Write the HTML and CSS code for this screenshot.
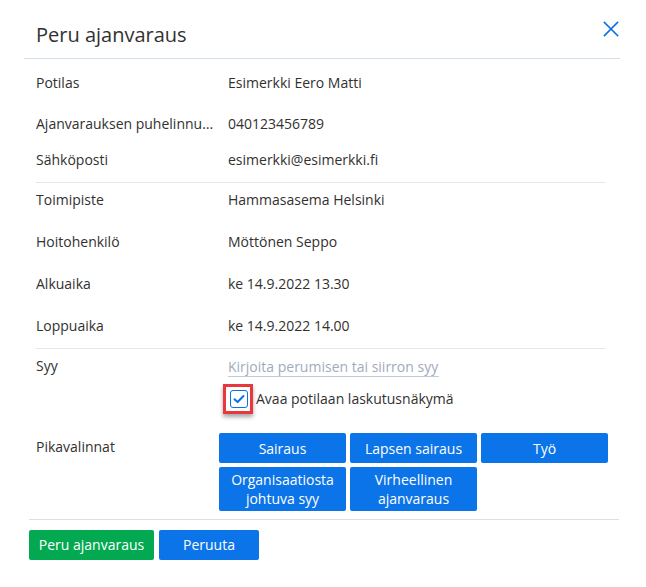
FILE: index.html
```html
<!DOCTYPE html>
<html lang="fi">
<head>
<meta charset="utf-8">
<title>Peru ajanvaraus</title>
<link rel="stylesheet" href="styles.css">
</head>
<body>
<div class="dialog">
  <div class="header">
    <h1 class="title">Peru ajanvaraus</h1>
    <button class="close" aria-label="Sulje">
      <svg width="16" height="16" viewBox="0 0 16 16"><path d="M1.5 1.5 L14.5 14.5 M14.5 1.5 L1.5 14.5" stroke="#0b72e3" stroke-width="1.7" fill="none" stroke-linecap="square"/></svg>
    </button>
  </div>

  <div class="section s1">
    <div class="row r1"><div class="label">Potilas</div><div class="value">Esimerkki Eero Matti</div></div>
    <div class="row r2"><div class="label">Ajanvarauksen puhelinnumero</div><div class="value">040123456789</div></div>
    <div class="row r3"><div class="label">Sähköposti</div><div class="value">esimerkki@esimerkki.fi</div></div>
  </div>

  <div class="section s2">
    <div class="row"><div class="label">Toimipiste</div><div class="value">Hammasasema Helsinki</div></div>
    <div class="row"><div class="label">Hoitohenkilö</div><div class="value">Möttönen Seppo</div></div>
    <div class="row"><div class="label">Alkuaika</div><div class="value">ke 14.9.2022 13.30</div></div>
    <div class="row"><div class="label">Loppuaika</div><div class="value">ke 14.9.2022 14.00</div></div>
  </div>

  <div class="section s3">
    <div class="row r-syy"><div class="label">Syy</div><div class="value"><input class="reason" type="text" placeholder="Kirjoita perumisen tai siirron syy"></div></div>
    <div class="row r-check">
      <div class="label"></div>
      <div class="value check-line">
        <span class="highlight">
          <span class="checkbox">
            <svg width="14" height="14" viewBox="0 0 14 14"><path d="M2.5 7.2 L5.6 10 L11.5 4" stroke="#0b72e3" stroke-width="2" fill="none" stroke-linecap="round" stroke-linejoin="round"/></svg>
          </span>
        </span>
        <span class="check-text">Avaa potilaan laskutusnäkymä</span>
      </div>
    </div>
    <div class="row r-quick">
      <div class="label">Pikavalinnat</div>
      <div class="quick">
        <button class="qbtn">Sairaus</button>
        <button class="qbtn">Lapsen sairaus</button>
        <button class="qbtn">Työ</button>
        <button class="qbtn tall">Organisaatiosta<br>johtuva syy</button>
        <button class="qbtn tall">Virheellinen<br>ajanvaraus</button>
      </div>
    </div>
  </div>

  <div class="footer">
    <button class="btn green">Peru ajanvaraus</button>
    <button class="btn blue">Peruuta</button>
  </div>
</div>
</body>
</html>
```
FILE: styles.css
```css
* { box-sizing: border-box; }
html, body { margin: 0; padding: 0; background: #ffffff; }
body {
  font-family: "Open Sans", "Noto Sans", sans-serif;
  font-size: 14px;
  color: #323130;
}
.dialog { width: 646px; height: 587px; }

.header {
  margin: 0 26px 0 24px;
  height: 59px;
  border-bottom: 1px solid #d3e0ec;
  display: flex;
  align-items: flex-start;
  justify-content: space-between;
}
.title {
  margin: 21px 0 0 12px;
  font-size: 20px;
  font-weight: 400;
  line-height: 28px;
  color: #323130;
}
.close {
  margin: 21px 1px 0 0;
  padding: 0;
  border: 0;
  background: none;
  width: 16px;
  height: 16px;
  display: block;
}
.close svg { display: block; }

.section {
  margin: 0 40px 0 36px;
  border-bottom: 1px solid #e3e8ec;
}
.row { display: flex; line-height: 20px; }
.label {
  width: 192px;
  flex: none;
  padding-right: 8px;
  white-space: nowrap;
  overflow: hidden;
  text-overflow: ellipsis;
}
.value { flex: 1; }

.s1 { padding-top: 14px; height: 124px; }
.s1 .r2 { margin-top: 21px; }
.s1 .r3 { margin-top: 16px; }

.s2 { padding-top: 7px; height: 166px; }
.s2 .row { height: 42px; }
.s2 .row:last-child { height: 34px; }

.s3 { border-bottom: none; margin-right: 37px; }
.r-syy { margin-top: 7px; }
.reason {
  font: inherit;
  width: 211px;
  border: 0;
  border-bottom: 1px solid #c3cad6;
  padding: 0;
  height: 21px;
  line-height: 20px;
  outline: none;
  color: #323130;
}
.reason::placeholder { color: #a1abbd; }

.r-check { margin-top: 7px; }
.check-line { display: flex; align-items: center; margin-left: -5px; }
.highlight {
  width: 30px;
  height: 30px;
  border: 3px solid #e8383d;
  padding: 3px 0 0 4px;
  box-shadow: 0 3px 4px rgba(0,0,0,0.35);
  background: #fff;
}
.checkbox {
  display: flex;
  align-items: center;
  justify-content: center;
  width: 18px;
  height: 18px;
  border: 1.5px solid #0b72e3;
  border-radius: 3px;
  background: #fff;
}
.checkbox svg { display: block; }
.check-text { margin-left: 3px; }

.r-quick { margin-top: 19px; }
.r-quick .label { padding-top: 4px; width: 183px; }
.quick {
  display: grid;
  grid-template-columns: repeat(3, 127px);
  grid-auto-rows: auto;
  column-gap: 4px;
  row-gap: 4px;
}
.qbtn {
  font: inherit;
  color: #fff;
  background: #0b74e8;
  border: 0;
  border-radius: 2px;
  height: 30px;
  padding: 0 4px;
  line-height: 19px;
  text-align: center;
}
.qbtn.tall { height: 44px; }

.footer {
  margin: 8px 27px 0 29px;
  border-top: 1px solid #d9dfe4;
  padding-top: 10px;
  display: flex;
  gap: 5px;
}
.btn {
  font: inherit;
  color: #fff;
  border: 0;
  border-radius: 2px;
  height: 30px;
  line-height: 20px;
  padding: 0;
}
.btn.green { background: #02a950; width: 125px; }
.btn.blue { background: #0b74e8; width: 100px; }
```
